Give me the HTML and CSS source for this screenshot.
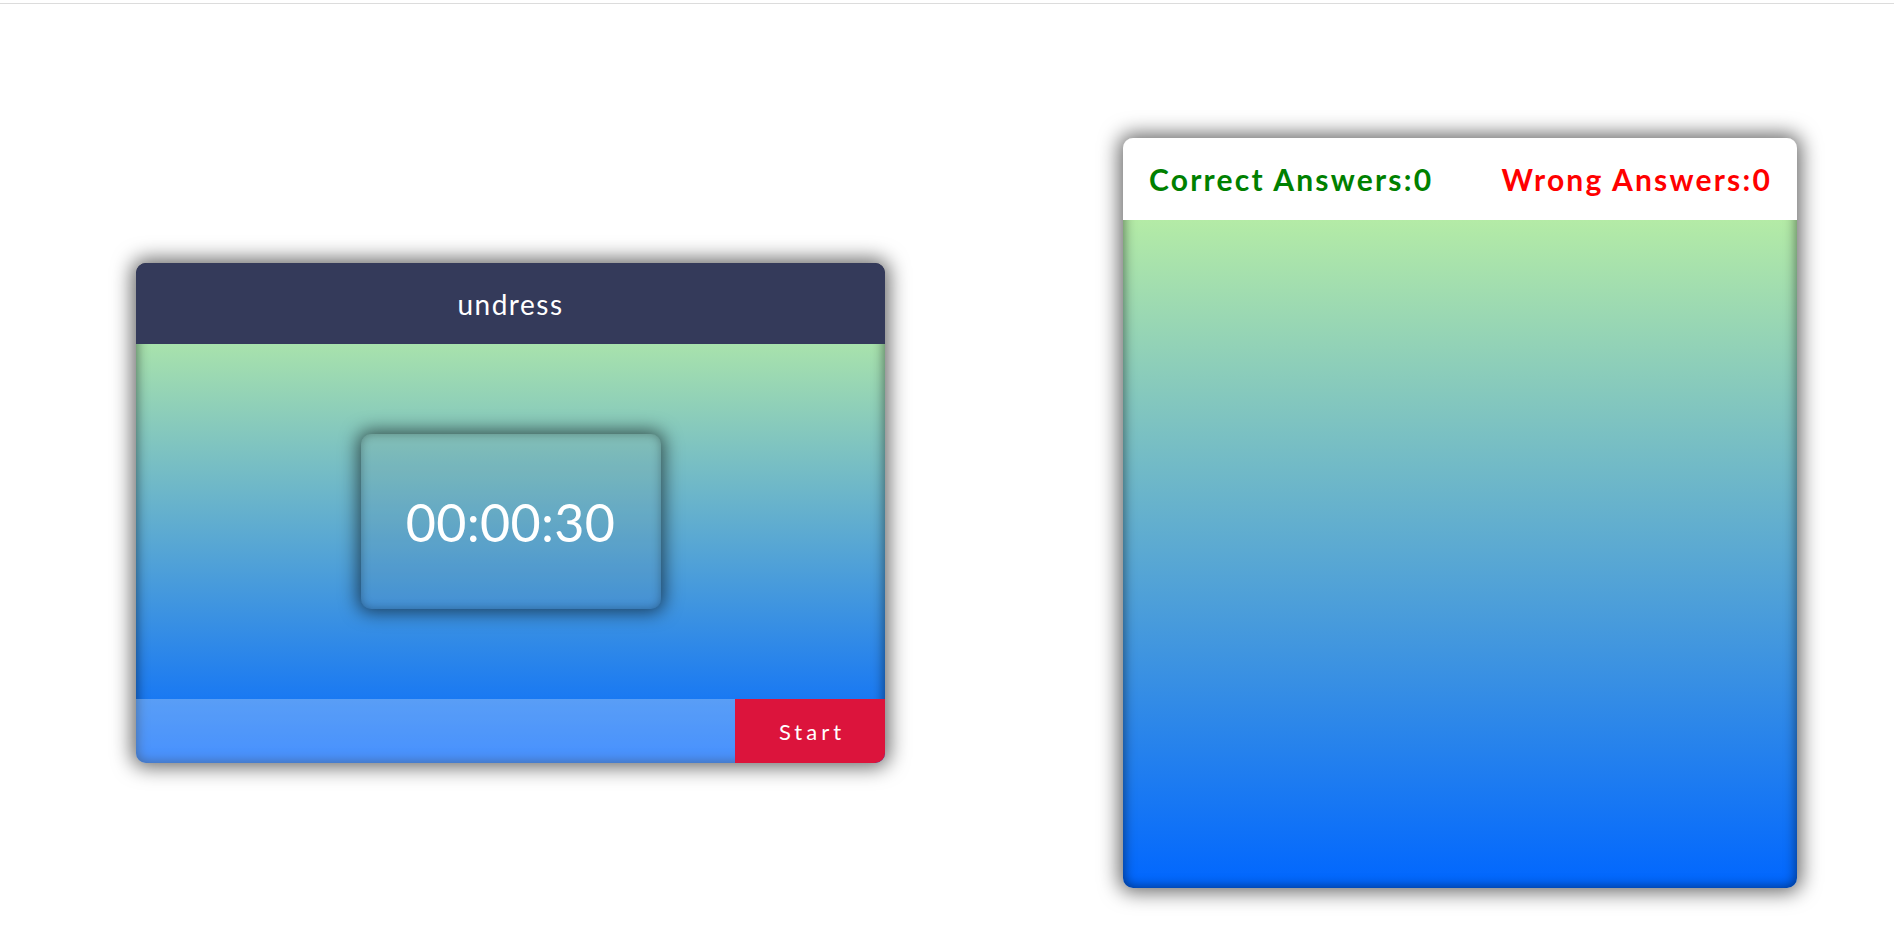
FILE: index.html
```html
<!DOCTYPE html>
<html lang="en">
<head>
<meta charset="utf-8">
<title>Typing Timer</title>
<link rel="stylesheet" href="styles.css">
</head>
<body>
<div class="topline"></div>
<main class="stage">
  <section class="card timer-card">
    <div class="word-head">undress</div>
    <div class="timer-area">
      <div class="clock">00:00:30</div>
    </div>
    <div class="entry">
      <input class="entry-input" type="text" aria-label="Type the word">
      <button class="start-btn">Start</button>
    </div>
  </section>
  <section class="card score-card">
    <div class="score-head">
      <span class="correct">Correct Answers:0</span>
      <span class="wrong">Wrong Answers:0</span>
    </div>
    <div class="score-body"></div>
  </section>
</main>
</body>
</html>
```

FILE: styles.css
```css
* { box-sizing: border-box; }
html, body { margin: 0; padding: 0; background: #fff; }
body {
  font-family: "Lato", "Open Sans", sans-serif;
  width: 1894px;
  height: 941px;
  overflow: hidden;
}
.topline {
  height: 4px;
  border-bottom: 1px solid #dcdcdc;
}
.stage {
  display: flex;
  align-items: center;
  padding-top: 134px;
  padding-left: 136px;
  gap: 238px;
}
.card {
  border-radius: 10px;
  overflow: hidden;
  display: flex;
  flex-direction: column;
  box-shadow: 0 0 20px 4px rgba(0,0,0,0.6), inset 0 0 12px 1px rgba(0,0,0,0.5);
}
.timer-card {
  width: 749px;
  height: 500px;
  background: linear-gradient(to bottom, #343a5a 0, #343a5a 81px, #a8e2ac 81px, #0066ff 100%);
}
.word-head {
  height: 81px;
  background: #343a5a;
  color: #fff;
  font-size: 28px;
  letter-spacing: 1.5px;
  display: flex;
  align-items: center;
  justify-content: center;
}
.timer-area {
  flex: 1;
  display: flex;
  align-items: center;
  justify-content: center;
}
.clock {
  width: 300px;
  height: 175px;
  border-radius: 10px;
  display: flex;
  align-items: center;
  justify-content: center;
  color: #fff;
  font-size: 52px;
  letter-spacing: 0.3px;
  background: rgba(120,120,120,0.1);
  box-shadow: 0 0 18px 3px rgba(0,0,0,0.6), inset 0 0 10px rgba(0,0,0,0.3);
}
.entry {
  height: 64px;
  display: flex;
}
.entry-input {
  flex: 1;
  border: none;
  outline: none;
  margin: 0;
  background: rgba(255,255,255,0.28);
}
.start-btn {
  width: 150px;
  border: none;
  margin: 0;
  background: #dc143c;
  color: #fff;
  font-family: "Lato", sans-serif;
  font-size: 22px;
  letter-spacing: 4px;
  padding: 0 0 0 4px;
}
.score-card {
  width: 674px;
  height: 750px;
  background: linear-gradient(to bottom, #fff 0, #fff 82px, #b4eba6 82px, #0066ff 100%);
}
.score-head {
  height: 82px;
  background: #fff;
  display: flex;
  align-items: center;
  justify-content: space-between;
  padding: 0 25px 0 26px;
  font-weight: 700;
  font-size: 30px;
  letter-spacing: 2.2px;
}
.correct { color: #008000; }
.wrong { color: #ff0000; }
.score-body { flex: 1; }
```
